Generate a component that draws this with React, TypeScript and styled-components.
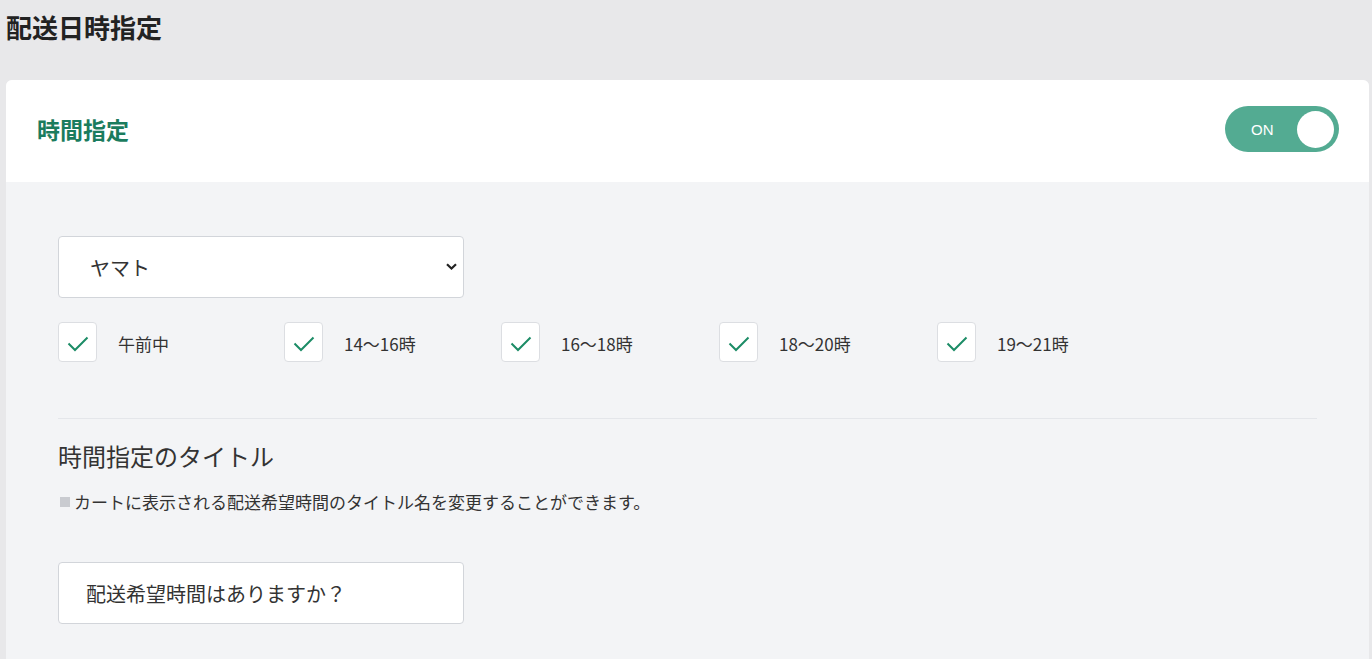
import React, { useState } from "react";
import styled, { createGlobalStyle } from "styled-components";

const GlobalStyle = createGlobalStyle`
  * {
    box-sizing: border-box;
  }
  body {
    margin: 0;
    background: #e8e8ea;
    font-family: "Noto Sans CJK JP", "Noto Sans", "Liberation Sans", sans-serif;
    color: #222;
  }
`;

const Page = styled.div`
  padding: 0 3px 0 6px;
  height: 659px;
  overflow: hidden;
`;

const PageTitle = styled.h1`
  margin: 0;
  height: 80px;
  padding-top: 9px;
  font-size: 26px;
  line-height: 36px;
  font-weight: 700;
  color: #222;
`;

const Card = styled.section`
  background: #f3f4f6;
  border-radius: 6px 6px 0 0;
  overflow: hidden;
`;

const CardHeader = styled.header`
  height: 102px;
  background: #fff;
  display: flex;
  align-items: center;
  justify-content: space-between;
  padding: 0 30px 4px 31px;
`;

const CardTitle = styled.h2`
  margin: 0;
  font-size: 23px;
  font-weight: 700;
  color: #1b7c5e;
`;

const Toggle = styled.button<{ $on: boolean }>`
  width: 114px;
  height: 46px;
  border: none;
  border-radius: 23px;
  background: ${(p) => (p.$on ? "#53ab92" : "#c3c6cc")};
  display: flex;
  align-items: center;
  justify-content: space-between;
  padding: 0 5px 0 26px;
  cursor: pointer;
  font-family: inherit;
`;

const ToggleLabel = styled.span`
  color: #fff;
  font-size: 15px;
  font-family: "Liberation Sans", "Noto Sans", sans-serif;
`;

const Knob = styled.span`
  width: 37px;
  height: 37px;
  border-radius: 50%;
  background: #fff;
`;

const CardBody = styled.div`
  padding: 54px 52px 40px;
`;

const SelectWrap = styled.div`
  position: relative;
  width: 406px;
`;

const Select = styled.select`
  appearance: none;
  width: 100%;
  height: 62px;
  border: 1px solid #d2d5da;
  border-radius: 4px;
  background: #fff;
  padding: 0 40px 0 31px;
  font-family: inherit;
  font-size: 20px;
  color: #333;
  outline: none;
`;

const Chevron = styled.svg`
  position: absolute;
  right: 7px;
  top: 27px;
  pointer-events: none;
`;

const CheckRow = styled.div`
  display: flex;
  margin-top: 24px;
  padding-bottom: 56px;
  border-bottom: 1px solid #e4e6ea;
`;

const CheckItem = styled.label<{ $width: number }>`
  width: ${(p) => p.$width}px;
  display: flex;
  align-items: center;
  gap: 21px;
  cursor: pointer;
`;

const Box = styled.span`
  width: 39px;
  height: 40px;
  border: 1px solid #dcdee2;
  border-radius: 4px;
  background: #fff;
  display: flex;
  align-items: center;
  justify-content: center;
  padding-top: 3px;
`;

const CheckLabel = styled.span`
  font-size: 17px;
  color: #333;
  padding-top: 2px;
`;

const SectionTitle = styled.h3`
  margin: 20px 0 0;
  font-size: 24px;
  font-weight: 400;
  color: #333;
  line-height: 34px;
`;

const Note = styled.p`
  margin: 16px 0 0 2px;
  font-size: 17px;
  color: #333;
  display: flex;
  align-items: center;
  gap: 4px;
`;

const Square = styled.span`
  width: 10px;
  height: 10px;
  background: #c9cbd0;
`;

const TextInput = styled.input`
  margin-top: 48px;
  width: 406px;
  height: 62px;
  border: 1px solid #d2d5da;
  border-radius: 4px;
  background: #fff;
  padding: 0 27px;
  font-family: inherit;
  font-size: 20px;
  color: #333;
  outline: none;
`;

const slots = [
  { label: "午前中", width: 226 },
  { label: "14～16時", width: 217 },
  { label: "16～18時", width: 218 },
  { label: "18～20時", width: 218 },
  { label: "19～21時", width: 218 },
];

const Check = () => (
  <svg width="22" height="16" viewBox="0 0 22 16" fill="none">
    <path d="M1.5 7.5L8 14L20.5 1.5" stroke="#1c8c66" strokeWidth="2" />
  </svg>
);

export default function App() {
  const [on, setOn] = useState(true);
  const [title, setTitle] = useState("配送希望時間はありますか？");

  return (
    <Page>
      <GlobalStyle />
      <PageTitle>配送日時指定</PageTitle>
      <Card>
        <CardHeader>
          <CardTitle>時間指定</CardTitle>
          <Toggle $on={on} onClick={() => setOn(!on)}>
            <ToggleLabel>{on ? "ON" : "OFF"}</ToggleLabel>
            <Knob />
          </Toggle>
        </CardHeader>
        <CardBody>
          <SelectWrap>
            <Select defaultValue="yamato">
              <option value="yamato">ヤマト</option>
              <option value="sagawa">佐川</option>
              <option value="yubin">日本郵便</option>
            </Select>
            <Chevron width="11" height="7" viewBox="0 0 11 7" fill="none">
              <path d="M1 1.2L5.5 5.5L10 1.2" stroke="#222" strokeWidth="2.2" />
            </Chevron>
          </SelectWrap>
          <CheckRow>
            {slots.map((s) => (
              <CheckItem key={s.label} $width={s.width}>
                <Box>
                  <Check />
                </Box>
                <CheckLabel>{s.label}</CheckLabel>
              </CheckItem>
            ))}
          </CheckRow>
          <SectionTitle>時間指定のタイトル</SectionTitle>
          <Note>
            <Square />
            カートに表示される配送希望時間のタイトル名を変更することができます。
          </Note>
          <TextInput value={title} onChange={(e) => setTitle(e.target.value)} />
        </CardBody>
      </Card>
    </Page>
  );
}
